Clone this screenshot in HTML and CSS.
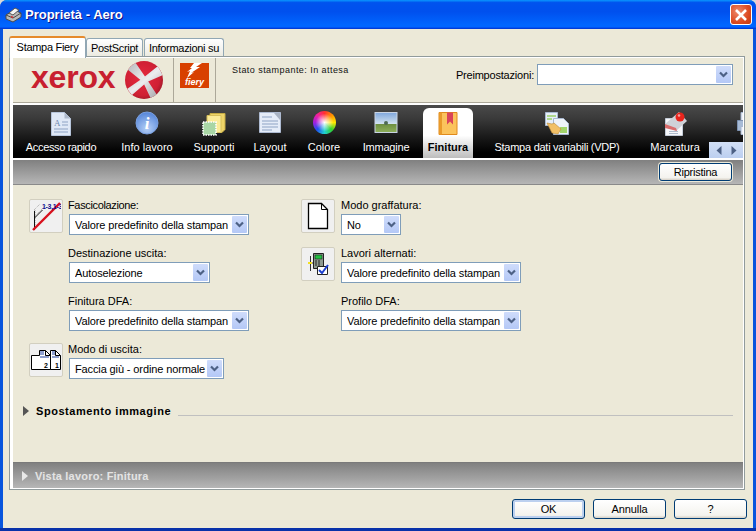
FILE: index.html
```html
<!DOCTYPE html>
<html lang="it">
<head>
<meta charset="utf-8">
<title>Proprietà - Aero</title>
<link rel="stylesheet" href="styles.css">
</head>
<body>
<svg class="defs" width="0" height="0" aria-hidden="true">
  <symbol id="chev" viewBox="0 0 15 17"><path d="M4 6.500 7.500 10 11 6.500" fill="none" stroke="#4d6185" stroke-width="2.200"/></symbol>
</svg>
<div class="window">
  <header class="titlebar">
    <svg class="title-icon" width="17" height="17" viewBox="0 0 17 17">
      <path d="M1 9 9 4l7 3v4l-8 5-7-3z" fill="#b9b9b9" stroke="#4a4a4a"/>
      <path d="M1 9l7 3 8-5" fill="none" stroke="#4a4a4a"/>
      <path d="M4 7l6-5 4 2-6 5z" fill="#f4f4f4" stroke="#555"/>
      <path d="M6 10.500l2 1" stroke="#d03030" stroke-width="1.500"/>
    </svg>
    <span class="title-text">Proprietà - Aero</span>
    <button class="close" type="button" aria-label="Chiudi">
      <svg width="14" height="14" viewBox="0 0 14 14"><path d="M2 2l10 10M12 2 2 12" stroke="#fff" stroke-width="2.600"/></svg>
    </button>
  </header>

  <div class="dialog">
    <nav class="tabs">
      <span class="tab tab-active">Stampa Fiery</span>
      <span class="tab tab-post">PostScript</span>
      <span class="tab tab-info">Informazioni su</span>
    </nav>

    <section class="panel">
      <div class="brand">
        <div class="brand-xerox">
          <span class="xerox-word">xerox</span>
          <svg class="xerox-ball" width="40" height="40" viewBox="0 0 40 40">
            <defs>
              <radialGradient id="ballRed" cx="0.45" cy="0.45" r="0.65">
                <stop offset="0" stop-color="#e62a40"/><stop offset="0.7" stop-color="#cf2034"/><stop offset="1" stop-color="#8a1624"/>
              </radialGradient>
              <linearGradient id="ballBand" x1="0" y1="0" x2="1" y2="1">
                <stop offset="0" stop-color="#b4b4b8"/><stop offset="0.5" stop-color="#ececee"/><stop offset="1" stop-color="#a8a8ac"/>
              </linearGradient>
              <clipPath id="ballClip"><circle cx="20" cy="20" r="19"/></clipPath>
            </defs>
            <circle cx="20" cy="20" r="19" fill="url(#ballRed)"/>
            <g clip-path="url(#ballClip)">
              <path d="M3 9 11 2 22 18 33 35 27 39 19 22z" fill="url(#ballBand)"/>
              <path d="M34 6 39 15 23 22 8 35 3 29 19 18z" fill="url(#ballBand)"/>
            </g>
          </svg>
        </div>
        <div class="brand-fiery">
          <div class="fiery">
            <svg class="fiery-bolt" width="15" height="15" viewBox="0 0 15 15"><path d="M7 0h8L9 4l4 0-9 6 3-1-7 6 3-7-3 1 5-4H3z" fill="#fff"/></svg>
            <span class="fiery-word">fiery</span>
          </div>
        </div>
        <div class="status">Stato stampante: In attesa</div>
        <div class="preset">
          <span class="preset-label">Preimpostazioni:</span>
          <div class="combo combo-preset"><span class="combo-text"></span><span class="combo-btn"><svg width="15" height="17"><use href="#chev"/></svg></span></div>
        </div>
      </div>

      <div class="toolbar">
        <div class="nav-item w-a">
          <svg class="nav-icon" width="24" height="26" viewBox="0 0 24 26">
            <path d="M2.500 1.500h13l6 6v17h-19z" fill="#dfe8f6" stroke="#b8c6dc"/>
            <path d="M15.500 1.500v6h6z" fill="#aeb9cb"/>
            <text x="5" y="15" class="nav-a">A</text>
            <path d="M13 11h6M13 14h6M5 18h14M5 21h14" stroke="#8ea3c4"/>
          </svg>
          <span>Accesso rapido</span>
        </div>
        <div class="nav-item w-b">
          <svg class="nav-icon" width="24" height="26" viewBox="0 0 24 26">
            <defs><radialGradient id="infoB" cx="0.5" cy="0.75" r="0.8"><stop offset="0" stop-color="#b4cff6"/><stop offset="1" stop-color="#4d7fd6"/></radialGradient></defs>
            <circle cx="12" cy="12" r="11" fill="url(#infoB)" stroke="#7aa0e0"/>
            <text x="12" y="18" class="nav-i">i</text>
          </svg>
          <span>Info lavoro</span>
        </div>
        <div class="nav-item w-c">
          <svg class="nav-icon" width="24" height="26" viewBox="0 0 24 26">
            <path d="M8 2.500h15v16l-3 3H8z" fill="#eed468" stroke="#c4ab45"/>
            <path d="M5 4.500h14v17H5z" fill="#fbeb98" stroke="#d6bf5a"/>
            <rect x="1" y="11" width="13" height="13" fill="#a9d6a5" stroke="#fff" stroke-width="1.600" stroke-dasharray="1.500 1"/>
          </svg>
          <span>Supporti</span>
        </div>
        <div class="nav-item w-d">
          <svg class="nav-icon" width="24" height="26" viewBox="0 0 24 26">
            <path d="M1.500 1.500h21v20h-21z" fill="#e5ecf8" stroke="#aebbd2"/>
            <path d="M16 2h6v7z" fill="#a8b2c2"/>
            <path d="M4 6h10M4 10h16M4 13h16M4 16h16M4 19h10" stroke="#8ea3c4"/>
          </svg>
          <span>Layout</span>
        </div>
        <div class="nav-item w-e">
          <div class="wheel"></div>
          <span>Colore</span>
        </div>
        <div class="nav-item w-f">
          <svg class="nav-icon" width="24" height="26" viewBox="0 0 24 26">
            <defs><linearGradient id="sky" x1="0" y1="0" x2="0" y2="1"><stop offset="0" stop-color="#7fa7dd"/><stop offset="0.55" stop-color="#cfe0ef"/><stop offset="0.6" stop-color="#6f9042"/><stop offset="1" stop-color="#8fb05c"/></linearGradient></defs>
            <rect x="1" y="1.500" width="22" height="20" fill="url(#sky)" stroke="#c9d4e4"/>
            <circle cx="12" cy="12" r="2" fill="#4e6a55"/>
          </svg>
          <span>Immagine</span>
        </div>
        <div class="nav-item nav-active w-g">
          <svg class="nav-icon" width="24" height="26" viewBox="0 0 24 26">
            <path d="M3 1.500h18v22H3z" fill="#fbc35c" stroke="#e08a1c"/>
            <path d="M3 1.500h3v22H3z" fill="#e99a2a"/>
            <path d="M11 1.500h6v12l-3-3-3 3z" fill="#d9445a"/>
          </svg>
          <span>Finitura</span>
        </div>
        <div class="nav-item w-h">
          <svg class="nav-icon" width="26" height="26" viewBox="0 0 26 26">
            <path d="M1.500 1.500h12v13h-12z" fill="#e6eef8" stroke="#a8b8d0"/>
            <path d="M3 5h9M3 8h5" stroke="#9ccf6a" stroke-width="1.500"/>
            <path d="M9.500 7.500h10l5 5v11h-15z" fill="#eef3fa" stroke="#a8b8d0"/>
            <rect x="16" y="16" width="7" height="6" fill="#a3d56c"/>
            <path d="M3 12l5 1 2-1 7 6-3 5-6-1z" fill="#f2c067" stroke="#b98a3a" stroke-width="0.600"/>
          </svg>
          <span>Stampa dati variabili (VDP)</span>
        </div>
        <div class="nav-item w-i">
          <svg class="nav-icon" width="26" height="26" viewBox="0 0 26 26">
            <path d="M3.500 7.500h13l4 4v13h-17z" fill="#f6f7fa" stroke="#c4ccd8"/>
            <path d="M7 20.500h9M7 22.500h9" stroke="#b0bccd"/>
            <path d="M3 13 17 1l8 9-11 10z" fill="#cfd2d8"/>
            <path d="M3 13l11 4 1 3-12-3z" fill="#d86c6c"/>
            <circle cx="18" cy="6" r="4.500" fill="#e8241c"/>
            <circle cx="17" cy="4.500" r="1.300" fill="#f8a0a0"/>
          </svg>
          <span>Marcatura</span>
        </div>
        <div class="nav-item w-j">
          <svg class="nav-icon" width="24" height="26" viewBox="0 0 24 26">
            <path d="M5 1.500h14v8H5z" fill="#eef2f8" stroke="#a8b8d0"/>
            <path d="M1.500 9.500h21v10h-21z" fill="#a7bbd6" stroke="#7e93b2"/>
            <path d="M5 15.500h14v8H5z" fill="#eef2f8" stroke="#a8b8d0"/>
          </svg>
        </div>
        <div class="scroller">
          <svg width="6" height="9" viewBox="0 0 6 9"><path d="M5.500 0v9L.5 4.500z" fill="#4d6185"/></svg>
          <svg width="6" height="9" viewBox="0 0 6 9"><path d="M.5 0v9l5-4.500z" fill="#4d6185"/></svg>
        </div>
      </div>

      <div class="band-top"><button class="btn btn-reset" type="button">Ripristina</button></div>

      <div class="content">
        <div class="options">
          <div class="opt">
            <div class="opt-icon">
              <svg width="30" height="30" viewBox="0 0 30 30">
                <path d="M3 9l6-6M3 16 15 4M4 28V9" fill="none" stroke="#a8a8a8" stroke-dasharray="1 1"/>
                <path d="M3.500 29V10M3.500 17l8-8" fill="none" stroke="#111"/>
                <path d="M2 29 29 2" stroke="#d8101c" stroke-width="2.400"/>
                <text x="11" y="8" class="icon-num">1-3,1-3</text>
              </svg>
            </div>
            <div class="opt-body">
              <label class="label-tight">Fascicolazione:</label>
              <div class="combo w-180"><span class="combo-text">Valore predefinito della stampan</span><span class="combo-btn"><svg width="15" height="17"><use href="#chev"/></svg></span></div>
            </div>
          </div>
          <div class="opt">
            <div class="opt-icon">
              <svg width="24" height="28" viewBox="0 0 24 28"><path d="M2.500 1.500h13l6 6v19h-19z" fill="#fff" stroke="#000" stroke-width="1.300"/><path d="M15.500 1.500v6h6" fill="none" stroke="#000"/></svg>
            </div>
            <div class="opt-body">
              <label>Modo graffatura:</label>
              <div class="combo w-60"><span class="combo-text">No</span><span class="combo-btn"><svg width="15" height="17"><use href="#chev"/></svg></span></div>
            </div>
          </div>
          <div class="opt">
            <div class="opt-noicon"></div>
            <div class="opt-body">
              <label>Destinazione uscita:</label>
              <div class="combo w-141"><span class="combo-text">Autoselezione</span><span class="combo-btn"><svg width="15" height="17"><use href="#chev"/></svg></span></div>
            </div>
          </div>
          <div class="opt">
            <div class="opt-icon">
              <svg width="24" height="24" viewBox="0 0 24 24">
                <path d="M7.500 1.500h10v15h-10z" fill="#8f9a8f" stroke="#222"/>
                <rect x="9" y="3" width="7" height="4" fill="#22c040" stroke="#111" stroke-width="0.500"/>
                <path d="M9 9h2M12 9h2M9 11h2M12 11h2M9 13h2M12 13h2" stroke="#222"/>
                <path d="M4.500 4v15M2 11h5" stroke="#333"/>
                <path d="M2 10h4v2H2z" fill="#f4e020"/>
                <path d="M11.500 14.500h10v8h-10z" fill="#fff" stroke="#222"/>
                <path d="M13 18l3 3 6-8" fill="none" stroke="#1c3fd0" stroke-width="2"/>
              </svg>
            </div>
            <div class="opt-body">
              <label>Lavori alternati:</label>
              <div class="combo w-180"><span class="combo-text">Valore predefinito della stampan</span><span class="combo-btn"><svg width="15" height="17"><use href="#chev"/></svg></span></div>
            </div>
          </div>
          <div class="opt">
            <div class="opt-noicon"></div>
            <div class="opt-body">
              <label>Finitura DFA:</label>
              <div class="combo w-180"><span class="combo-text">Valore predefinito della stampan</span><span class="combo-btn"><svg width="15" height="17"><use href="#chev"/></svg></span></div>
            </div>
          </div>
          <div class="opt">
            <div class="opt-noicon"></div>
            <div class="opt-body">
              <label>Profilo DFA:</label>
              <div class="combo w-180"><span class="combo-text">Valore predefinito della stampan</span><span class="combo-btn"><svg width="15" height="17"><use href="#chev"/></svg></span></div>
            </div>
          </div>
          <div class="opt">
            <div class="opt-icon">
              <svg width="32" height="22" viewBox="0 0 32 22">
                <path d="M1.500 6.500h8v-5h6l5 5v14h-19z" fill="#fff" stroke="#000"/>
                <path d="M20.500 1.500h5l5 5v14h-10z" fill="#fff" stroke="#000"/>
                <path d="M15.500 1.500v5h5M25.500 1.500v5h5" fill="none" stroke="#000"/>
                <path d="M10 3h4M10 5h4M10 8h9M22 3h3M22 5h3M22 8h7" stroke="#1c3fa0"/>
                <text x="18" y="19" class="icon-digit">2</text>
                <text x="29" y="19" class="icon-digit">1</text>
              </svg>
            </div>
            <div class="opt-body">
              <label>Modo di uscita:</label>
              <div class="combo w-155"><span class="combo-text">Faccia giù - ordine normale</span><span class="combo-btn"><svg width="15" height="17"><use href="#chev"/></svg></span></div>
            </div>
          </div>
        </div>
        <div class="section-head">
          <svg width="6" height="10" viewBox="0 0 6 10"><path d="M0 0v10l6-5z" fill="#555"/></svg>
          <span class="section-title">Spostamento immagine</span>
          <span class="section-rule"></span>
        </div>
      </div>

      <div class="band-bottom">
        <svg width="6" height="10" viewBox="0 0 6 10"><path d="M0 0v10l6-5z" fill="#e8e8e8"/></svg>
        <span>Vista lavoro: Finitura</span>
      </div>
    </section>

    <footer class="footer">
      <button class="btn btn-default" type="button">OK</button>
      <button class="btn" type="button">Annulla</button>
      <button class="btn" type="button">?</button>
    </footer>
  </div>
</div>
</body>
</html>
```

FILE: styles.css
```css
* { box-sizing: border-box; }
html, body { margin: 0; padding: 0; }
body {
  width: 756px;
  height: 531px;
  overflow: hidden;
  background: #d8d8d8;
  font-family: "Liberation Sans", Arial, sans-serif;
  font-size: 11px;
  color: #000;
}
.defs { display: block; height: 0; }

.window {
  display: flex;
  flex-direction: column;
  width: 756px;
  height: 531px;
  background: #0855dd;
  border-radius: 7px 7px 0 0;
  overflow: hidden;
  border-bottom: 3px solid #0831a9;
}

.titlebar {
  display: flex;
  align-items: center;
  flex: none;
  height: 29px;
  padding: 0 4px 0 5px;
  background: linear-gradient(180deg, #0997ff 0, #0053ee 9%, #0050ee 40%, #0066ff 86%, #0066ff 92%, #005bff 94%, #003dd7 97%, #003dd7 100%);
}
.title-icon { flex: none; margin-right: 3px; }
.title-text {
  color: #fff;
  font-family: "Liberation Sans", Arial, sans-serif;
  font-weight: 700;
  font-size: 13px;
  text-shadow: 1px 1px 0 #0f1089;
}
.close {
  display: flex;
  align-items: center;
  justify-content: center;
  margin-left: auto;
  width: 22px;
  height: 21px;
  padding: 0;
  border: 1px solid #fff;
  border-radius: 3px;
  background: radial-gradient(circle at 35% 35%, #ee8a6c, #dc4a22 60%, #c23a12);
}

.dialog {
  display: flex;
  flex-direction: column;
  flex: 1;
  margin: 0 3px;
  padding: 7px 7px 0 6px;
  background: #ece9d8;
}

.tabs {
  display: flex;
  flex: none;
  height: 20px;
  align-items: flex-end;
  position: relative;
  z-index: 1;
}
.tab {
  display: flex;
  align-items: center;
  justify-content: center;
  height: 18px;
  border: 1px solid #91a7b4;
  border-bottom: 0;
  border-radius: 3px 3px 0 0;
  background: linear-gradient(180deg, #fff, #f3f3ef 60%, #ecebe0);
  font-size: 11px;
  letter-spacing: -0.3px;
}
.tab-active {
  width: 77px;
  height: 22px;
  margin-bottom: -2px;
  padding-bottom: 3px;
  background: #fff;
  border-top: 2px solid #e68b2c;
}
.tab-post { width: 57px; margin-right: 1px; }
.tab-info { width: 80px; }

.panel {
  display: flex;
  flex-direction: column;
  flex: none;
  width: 736px;
  height: 434px;
  padding: 1px 1px 1px 3px;
  background: #fff;
  border: 1px solid #919b9c;
}

.brand {
  display: flex;
  flex: none;
  align-items: stretch;
  height: 45px;
  background: #ece9d8;
  border-bottom: 1px solid #aca899;
}
.brand-xerox {
  display: flex;
  align-items: center;
  width: 161px;
  height: 44px;
  padding-left: 18px;
  border-right: 1px solid #aca899;
}
.xerox-word {
  font-weight: 700;
  font-size: 32px;
  line-height: 38px;
  letter-spacing: -0.2px;
  color: #c8202f;
  margin-top: -6px;
}
.xerox-ball { margin-left: 9px; flex: none; }
.brand-fiery {
  display: flex;
  justify-content: center;
  width: 42px;
  height: 44px;
  padding-top: 5px;
  border-right: 1px solid #aca899;
}
.fiery {
  display: flex;
  flex-direction: column;
  align-items: center;
  width: 29px;
  height: 25px;
  background: #d84000;
}
.fiery-bolt { flex: none; }
.fiery-word {
  color: #fff;
  font-weight: 700;
  font-style: italic;
  font-size: 9px;
  line-height: 9px;
}
.status {
  margin-left: 16px;
  padding-top: 7px;
  font-size: 9px;
  letter-spacing: 0.45px;
  color: #111;
}
.preset {
  display: flex;
  align-items: center;
  gap: 3px;
  margin-left: auto;
  height: 21px;
  margin-top: 6px;
  padding-right: 10px;
}
.preset-label { letter-spacing: -0.2px; }

.combo {
  display: flex;
  align-items: center;
  height: 21px;
  padding-left: 5px;
  background: #fff;
  border: 1px solid #7f9db9;
}
.combo-text { flex: 1; white-space: nowrap; overflow: hidden; letter-spacing: -0.12px; }
.combo-btn {
  display: block;
  flex: none;
  width: 15px;
  height: 17px;
  margin-right: 1px;
  background: linear-gradient(180deg, #cfdcfb, #b4c8f6);
  border-radius: 1px;
}
.combo-btn svg { display: block; }
.combo-preset { width: 196px; }
.w-180 { width: 180px; }
.w-141 { width: 141px; }
.w-155 { width: 155px; }
.w-60 { width: 60px; }

.toolbar {
  display: flex;
  flex: none;
  position: relative;
  height: 53px;
  margin-top: 2px;
  overflow: hidden;
  background: linear-gradient(180deg, #4a4a4a 0, #3a3a3a 25%, #1a1a1a 60%, #000 90%, #000 100%);
}
.nav-item {
  display: flex;
  flex: none;
  flex-direction: column;
  align-items: center;
  height: 53px;
  padding-top: 6px;
  color: #fff;
  white-space: nowrap;
}
.nav-item > span {
  margin-top: 3px;
  font-size: 11px;
  line-height: 14px;
}
.nav-icon { display: block; flex: none; }
.nav-a { font-family: "Liberation Serif", serif; font-size: 9px; fill: #7089b0; }
.nav-i { font-family: "Liberation Serif", serif; font-size: 17px; font-weight: 700; font-style: italic; fill: #fff; text-anchor: middle; }
.wheel {
  width: 23px;
  height: 23px;
  margin: 0 0 3px;
  border-radius: 50%;
  background:
    radial-gradient(circle at 50% 50%, #fff 0, rgba(255,255,255,0.6) 22%, rgba(255,255,255,0) 55%),
    conic-gradient(#ff3030, #ff9000, #ffe800, #30d030, #20d0d0, #2050f0, #a020e0, #f020a0, #ff3030);
}
.nav-active {
  margin-top: 3px;
  margin-left: 2px;
  height: 50px;
  padding-top: 3px;
  color: #000;
  background: linear-gradient(180deg, #fff 0, #fff 55%, #bdbdbd 100%);
  border-radius: 6px 6px 0 0;
}
.nav-active > span { font-weight: 700; }
.w-a { width: 96px; }
.w-a > span { letter-spacing: -0.35px; }
.w-b { width: 76px; }
.w-c { width: 58px; }
.w-d { width: 54px; }
.w-e { width: 54px; }
.w-f { width: 70px; }
.w-f > span { letter-spacing: -0.2px; }
.w-g { width: 50px; }
.w-h { width: 168px; }
.w-h > span { letter-spacing: -0.26px; }
.w-i { width: 68px; }
.w-j { width: 78px; }
.scroller {
  display: flex;
  align-items: center;
  justify-content: space-around;
  position: absolute;
  right: 0;
  bottom: 0;
  width: 34px;
  height: 16px;
  padding: 0 2px;
  background: linear-gradient(180deg, #d2dff5, #bccff0);
}

.band-top {
  display: flex;
  flex: none;
  align-items: center;
  justify-content: flex-end;
  height: 25px;
  margin-top: 2px;
  padding-right: 11px;
  background: linear-gradient(180deg, #808080, #b6b6b6);
  border-bottom: 1px solid #8a8a8a;
}

.btn {
  width: 73px;
  height: 20px;
  padding: 0;
  font: 11px "Liberation Sans", Arial, sans-serif;
  letter-spacing: -0.1px;
  color: #000;
  border: 1px solid #003c74;
  border-radius: 3px;
  background: linear-gradient(180deg, #fff, #f4f3ee 85%, #d6d0c5);
}
.btn-reset { height: 18px; box-shadow: 0 0 0 1px #ece9d8; letter-spacing: -0.25px; }
.btn-default { box-shadow: inset 0 0 0 2px #bcd0ef; }

.content {
  flex: 1;
  padding: 14px 10px 0 16px;
  background: #ece9d8;
}
.options {
  display: grid;
  grid-template-columns: 272px 1fr;
  grid-auto-rows: 48px;
}
.opt { display: flex; align-items: flex-start; gap: 5px; }
.opt-noicon { flex: none; width: 34px; }
.opt-icon {
  display: flex;
  flex: none;
  align-items: center;
  justify-content: center;
  width: 34px;
  height: 34px;
  background: #f0f0f0;
  border: 1px solid #d2cfc0;
  border-radius: 2px;
}
.opt-icon svg { display: block; }
.icon-num { font-size: 7px; font-weight: 700; fill: #101090; letter-spacing: -0.3px; }
.icon-digit { font-size: 7px; font-weight: 700; fill: #000; text-anchor: end; }
.opt-body { display: flex; flex-direction: column; }
.opt-body label { height: 15px; line-height: 13px; }
.opt-body .label-tight { letter-spacing: -0.35px; }
.opt:nth-child(even) label { margin-left: 1px; }
.opt-body .combo { margin-left: 1px; }

.section-head {
  display: flex;
  align-items: center;
  margin-top: 13px;
  margin-left: -6px;
  height: 14px;
}
.section-title {
  margin-left: 7px;
  font-weight: 700;
  font-size: 11px;
  letter-spacing: 0.55px;
  white-space: nowrap;
}
.section-rule {
  flex: 1;
  height: 1px;
  margin-top: 8px;
  margin-left: 7px;
  background: #c0c0c0;
}

.band-bottom {
  display: flex;
  flex: none;
  align-items: center;
  gap: 7px;
  height: 26px;
  padding-left: 9px;
  background: linear-gradient(180deg, #808080, #b6b6b6);
  border-top: 1px solid #7a7a7a;
  color: #e4e4e4;
  font-weight: 700;
  letter-spacing: 0.2px;
}

.footer {
  display: flex;
  flex: none;
  justify-content: flex-end;
  gap: 8px;
  margin-right: -1px;
  padding-top: 9px;
}
```
